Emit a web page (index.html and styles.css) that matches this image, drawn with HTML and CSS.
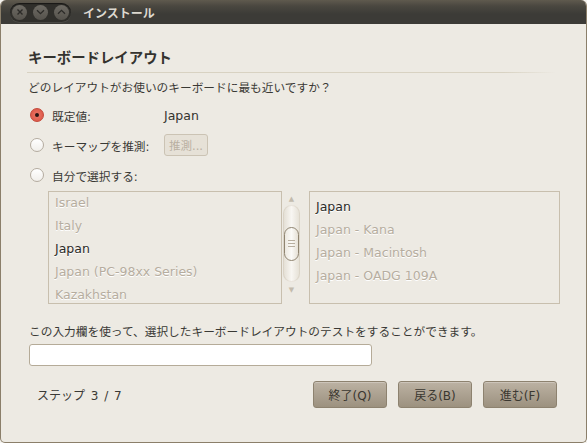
FILE: index.html
```html
<!DOCTYPE html>
<html>
<head>
  <title>インストール</title>
  <link rel="stylesheet" href="styles.css">
</head>
<body>
  <div class="window">
    <div class="titlebar">
      <div class="controls">
        <span class="ctl">
          <svg width="8" height="8" viewBox="0 0 8 8"><path d="M1.5 1.5l5 5M6.5 1.5l-5 5" stroke="#2c2b28" stroke-width="1.4"/></svg>
        </span>
        <span class="ctl">
          <svg width="9" height="6" viewBox="0 0 9 6"><path d="M1 1.2l3.5 3.5 3.5-3.5" stroke="#2c2b28" stroke-width="1.3" fill="none"/></svg>
        </span>
        <span class="ctl">
          <svg width="9" height="6" viewBox="0 0 9 6"><path d="M1 4.8l3.5-3.5 3.5 3.5" stroke="#2c2b28" stroke-width="1.3" fill="none"/></svg>
        </span>
      </div>
      <div class="title">インストール</div>
    </div>

    <div class="content">
      <h2>キーボードレイアウト</h2>
      <div class="sep"></div>
      <p class="question">どのレイアウトがお使いのキーボードに最も近いですか？</p>

      <div class="options">
        <div class="opt">
          <span class="radio on"></span>
          <span class="lbl">既定値:</span>
          <span class="val">Japan</span>
        </div>
        <div class="opt">
          <span class="radio"></span>
          <span class="lbl">キーマップを推測:</span>
          <span class="btn-small">推測...</span>
        </div>
        <div class="opt">
          <span class="radio"></span>
          <span class="lbl">自分で選択する:</span>
        </div>
      </div>

      <div class="lists">
        <div class="list left">
          <div class="item">Israel</div>
          <div class="item">Italy</div>
          <div class="item sel">Japan</div>
          <div class="item">Japan (PC-98xx Series)</div>
          <div class="item">Kazakhstan</div>
        </div>
        <div class="scroll">
          <span class="arrow">&#9650;</span>
          <div class="trough">
            <div class="thumb"><span class="grip"></span></div>
          </div>
          <span class="arrow">&#9660;</span>
        </div>
        <div class="list right">
          <div class="item sel">Japan</div>
          <div class="item">Japan - Kana</div>
          <div class="item">Japan - Macintosh</div>
          <div class="item">Japan - OADG 109A</div>
        </div>
      </div>

      <p class="hint">この入力欄を使って、選択したキーボードレイアウトのテストをすることができます。</p>
      <input type="text" class="test">

      <div class="footer">
        <span class="step">ステップ 3 / 7</span>
        <div class="buttons">
          <button>終了(Q)</button>
          <button>戻る(B)</button>
          <button>進む(F)</button>
        </div>
      </div>
    </div>
  </div>
</body>
</html>
```

FILE: styles.css
```css
body {
  margin: 0;
  padding: 0;
  background: #f5f3ef;
  font-family: "DejaVu Sans", "Noto Sans CJK JP", sans-serif;
  font-size: 11.7px;
  color: #3a3935;
}

.window {
  width: 587px;
  height: 443px;
  box-sizing: border-box;
  border: 1px solid #8b7f6a;
  border-top: none;
  border-radius: 6px 6px 5px 5px;
  background: #edeae3;
  overflow: hidden;
  display: flex;
  flex-direction: column;
}

.titlebar {
  height: 24px;
  flex: none;
  background: linear-gradient(#5f5a4e 0, #4a4740 6px, #3c3b37 14px, #3c3b37 100%);
  display: flex;
  align-items: center;
}

.controls {
  margin-left: 9px;
  height: 19px;
  width: 61px;
  box-sizing: border-box;
  padding: 0 2px;
  border-radius: 10px;
  background: #302f2b;
  box-shadow: inset 0 1px 1px rgba(0,0,0,0.5), 0 1px 0 rgba(255,255,255,0.08);
  display: flex;
  align-items: center;
  justify-content: space-between;
}

.ctl {
  width: 15px;
  height: 15px;
  border-radius: 50%;
  background: linear-gradient(#6e6b64, #55524c);
  display: flex;
  align-items: center;
  justify-content: center;
}

.title {
  margin-left: 12px;
  color: #dcd8cf;
  font-weight: bold;
  font-size: 12px;
}

.content {
  flex: 1;
  padding: 24px 0 0 27px;
  display: flex;
  flex-direction: column;
}

h2 {
  margin: 0;
  font-size: 14.4px;
  line-height: 20px;
  font-weight: bold;
  color: #34332f;
}

.sep {
  margin: 4px 30px 0 -1px;
  height: 1px;
  background: linear-gradient(to right, #d8d2c2 90%, rgba(216,210,194,0));
}

.question {
  margin: 6px 0 0;
  line-height: 18px;
}

.options {
  margin-top: 3px;
}

.opt {
  display: flex;
  align-items: center;
  height: 30px;
}

.radio {
  width: 12px;
  height: 12px;
  border-radius: 50%;
  border: 1px solid #b4aca0;
  background: linear-gradient(#ffffff, #f1efeb);
  margin: 0 8px 0 2px;
  position: relative;
}

.radio.on {
  border-color: #c4483a;
  background: radial-gradient(circle, #ee7a6a 0, #d84f3f 100%);
}

.radio.on::after {
  content: "";
  position: absolute;
  left: 4px;
  top: 4px;
  width: 4px;
  height: 4px;
  border-radius: 50%;
  background: #2a1512;
}

.lbl {
  width: 112px;
  white-space: nowrap;
}

.val {
  color: #34332f;
  font-size: 12.5px;
}

.btn-small {
  display: inline-block;
  width: 44px;
  height: 22px;
  line-height: 22px;
  box-sizing: border-box;
  border: 1px solid #cbc3b4;
  border-radius: 3px;
  background: #e6e1d7;
  color: #b9b0a2;
  text-align: center;
  font-size: 11.5px;
}

.lists {
  margin: 1px 0 0 20px;
  display: flex;
  height: 113px;
}

.list {
  box-sizing: border-box;
  border: 1px solid #c8bfae;
  height: 113px;
  overflow: hidden;
  padding-left: 6px;
  font-size: 12.5px;
}

.list.left {
  width: 234px;
}

.list.left .item:first-child {
  margin-top: -1px;
}

.list.right {
  width: 251px;
  margin-left: 8px;
  padding-top: 3px;
}

.item {
  height: 23px;
  line-height: 23px;
  color: #b6ad9f;
  text-shadow: 0 1px 0 #ffffff;
  white-space: nowrap;
}

.item.sel {
  color: #2c2b28;
}

.scroll {
  width: 19px;
  display: flex;
  flex-direction: column;
  align-items: center;
}

.arrow {
  font-size: 7px;
  color: #c3bbad;
  height: 14px;
  line-height: 16px;
}

.trough {
  width: 17px;
  height: 77px;
  border-radius: 9px;
  background: linear-gradient(to right, #e2ddd2, #f8f6f2 50%, #e4dfd4);
  box-shadow: inset 0 0 0 1px rgba(190,180,160,0.25);
  display: flex;
  align-items: center;
  justify-content: center;
}

.thumb {
  width: 15px;
  height: 34px;
  box-sizing: border-box;
  border: 1px solid #8f8470;
  border-radius: 8px;
  background: linear-gradient(to right, #ece8df, #fbfaf7 50%, #e6e1d6);
  display: flex;
  align-items: center;
  justify-content: center;
}

.grip {
  width: 7px;
  height: 5px;
  border-top: 1px solid #b8af9f;
  border-bottom: 1px solid #b8af9f;
  position: relative;
}

.grip::after {
  content: "";
  position: absolute;
  left: 0;
  right: 0;
  top: 2px;
  height: 1px;
  background: #b8af9f;
}

.hint {
  margin: 19px 0 0 1px;
  line-height: 18px;
}

.test {
  margin: 3px 0 0 1px;
  width: 343px;
  height: 22px;
  box-sizing: border-box;
  border: 1px solid #b5ab98;
  border-radius: 3px;
  background: #ffffff;
  padding: 0 4px;
  font: inherit;
}

.footer {
  margin-top: 15px;
  display: flex;
  align-items: center;
  justify-content: space-between;
  padding-right: 29px;
}

.step {
  margin-left: 9px;
  font-size: 12px;
  word-spacing: 2px;
}

.buttons {
  display: flex;
  gap: 11px;
}

button {
  width: 74px;
  height: 27px;
  border: 1px solid #8d826f;
  border-radius: 3px;
  background: linear-gradient(#bcb2a3, #9c917f);
  box-shadow: inset 0 1px 0 rgba(255,255,255,0.25);
  font: inherit;
  font-size: 12px;
  color: #3a3730;
  padding: 0;
}
```
